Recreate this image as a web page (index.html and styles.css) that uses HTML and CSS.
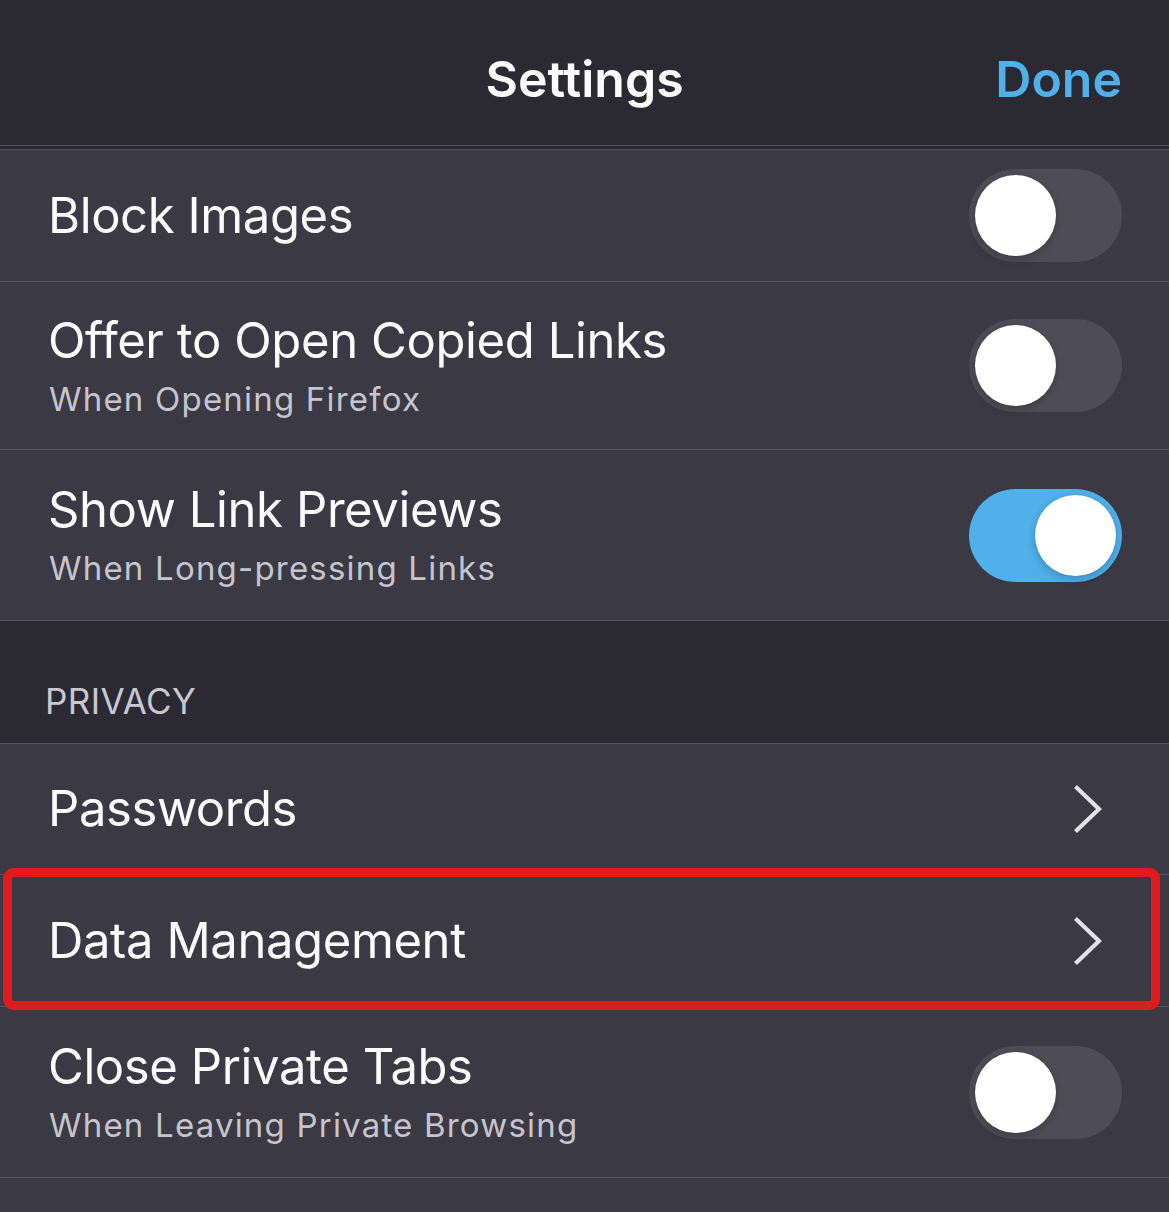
FILE: index.html
```html
<!DOCTYPE html>
<html lang="en">
<head>
<meta charset="utf-8">
<title>Settings</title>
<link rel="stylesheet" href="styles.css">
</head>
<body>
<div class="page">
  <header class="navbar">
    <div class="nav-title">Settings</div>
    <div class="nav-done">Done</div>
  </header>
  <div class="gap"></div>
  <div class="group">
    <div class="row row-single">
      <div class="texts"><div class="title">Block Images</div></div>
      <div class="toggle"><div class="knob"></div></div>
    </div>
    <div class="row row-double">
      <div class="texts"><div class="title">Offer to Open Copied Links</div><div class="subtitle">When Opening Firefox</div></div>
      <div class="toggle"><div class="knob"></div></div>
    </div>
    <div class="row row-double tall">
      <div class="texts"><div class="title">Show Link Previews</div><div class="subtitle">When Long-pressing Links</div></div>
      <div class="toggle on"><div class="knob"></div></div>
    </div>
  </div>
  <div class="section-header">PRIVACY</div>
  <div class="group">
    <div class="row row-single pw">
      <div class="texts"><div class="title">Passwords</div></div>
      <svg class="chevron" width="30" height="50" viewBox="0 0 30 50"><path d="M5 4 L27 25 L5 46" fill="none" stroke="#e2e1e8" stroke-width="4.2" stroke-linecap="square" stroke-linejoin="miter"/></svg>
    </div>
    <div class="row row-single dm">
      <div class="texts"><div class="title">Data Management</div></div>
      <svg class="chevron" width="30" height="50" viewBox="0 0 30 50"><path d="M5 4 L27 25 L5 46" fill="none" stroke="#e2e1e8" stroke-width="4.2" stroke-linecap="square" stroke-linejoin="miter"/></svg>
      <div class="highlight"></div>
    </div>
    <div class="row row-double tall">
      <div class="texts"><div class="title">Close Private Tabs</div><div class="subtitle">When Leaving Private Browsing</div></div>
      <div class="toggle"><div class="knob"></div></div>
    </div>
    <div class="row row-rest"></div>
  </div>
</div>
</body>
</html>
```

FILE: styles.css
```css
* { box-sizing: border-box; }
html, body {
  margin: 0;
  padding: 0;
  background: #2b2a33;
}
body {
  font-family: Inter, "Noto Sans", "Liberation Sans", sans-serif;
  color: #fbfbfe;
  width: 1169px;
  height: 1212px;
  overflow: hidden;
}
.page { display: flex; flex-direction: column; }
.navbar {
  height: 146px;
  border-bottom: 1px solid #55545e;
  background: #2b2a33;
  display: flex;
  align-items: center;
  justify-content: center;
  position: relative;
  padding-top: 12px;
}
.nav-title {
  font-size: 50px;
  font-weight: 600;
  color: #fbfbfe;
}
.nav-done {
  position: absolute;
  right: 47px;
  top: 49px;
  font-size: 50px;
  font-weight: 600;
  color: #4fb0ea;
}
.gap { height: 3px; background: #2b2a33; }
.group {
  border-top: 1px solid #55545e;
  background: #3a3944;
}
.row {
  display: flex;
  align-items: center;
  justify-content: space-between;
  padding: 0 47px 0 48px;
  border-bottom: 1px solid #55545e;
  position: relative;
}
.row-single { height: 132px; }
.row-double { height: 168px; }
.row-double.tall { height: 171px; }
.pw { height: 131px; }
.row-rest { height: 40px; border-bottom: none; }
.texts { display: flex; flex-direction: column; }
.title {
  font-size: 49px;
  line-height: 60px;
  font-weight: 400;
  color: #fbfbfe;
  letter-spacing: -0.4px;
}
.row-double .title { margin-top: -2px; }
.subtitle {
  font-size: 33px;
  line-height: 40px;
  margin-top: 8px;
  margin-left: 1px;
  color: #c6c5cd;
  letter-spacing: 1.2px;
}
.toggle {
  width: 153px;
  height: 93px;
  border-radius: 47px;
  background: #4e4d57;
  position: relative;
  flex-shrink: 0;
}
.toggle.on { background: #4fb0ea; }
.knob {
  position: absolute;
  top: 6px;
  left: 6px;
  width: 81px;
  height: 81px;
  border-radius: 50%;
  background: #ffffff;
  box-shadow: 0 3px 8px rgba(0,0,0,0.22), 0 0 1px rgba(0,0,0,0.15);
}
.toggle.on .knob { left: 66px; }
.chevron { margin-right: 20px; flex-shrink: 0; }
.highlight {
  position: absolute;
  left: 3px;
  top: -7px;
  width: 1157px;
  height: 142px;
  border: 9px solid #e01a1d;
  border-radius: 11px;
  pointer-events: none;
}
.section-header {
  height: 122px;
  background: #2b2a33;
  padding: 60px 0 0 45px;
  font-size: 35px;
  line-height: 40px;
  color: #c9c8d0;
  letter-spacing: 0.4px;
}
```
